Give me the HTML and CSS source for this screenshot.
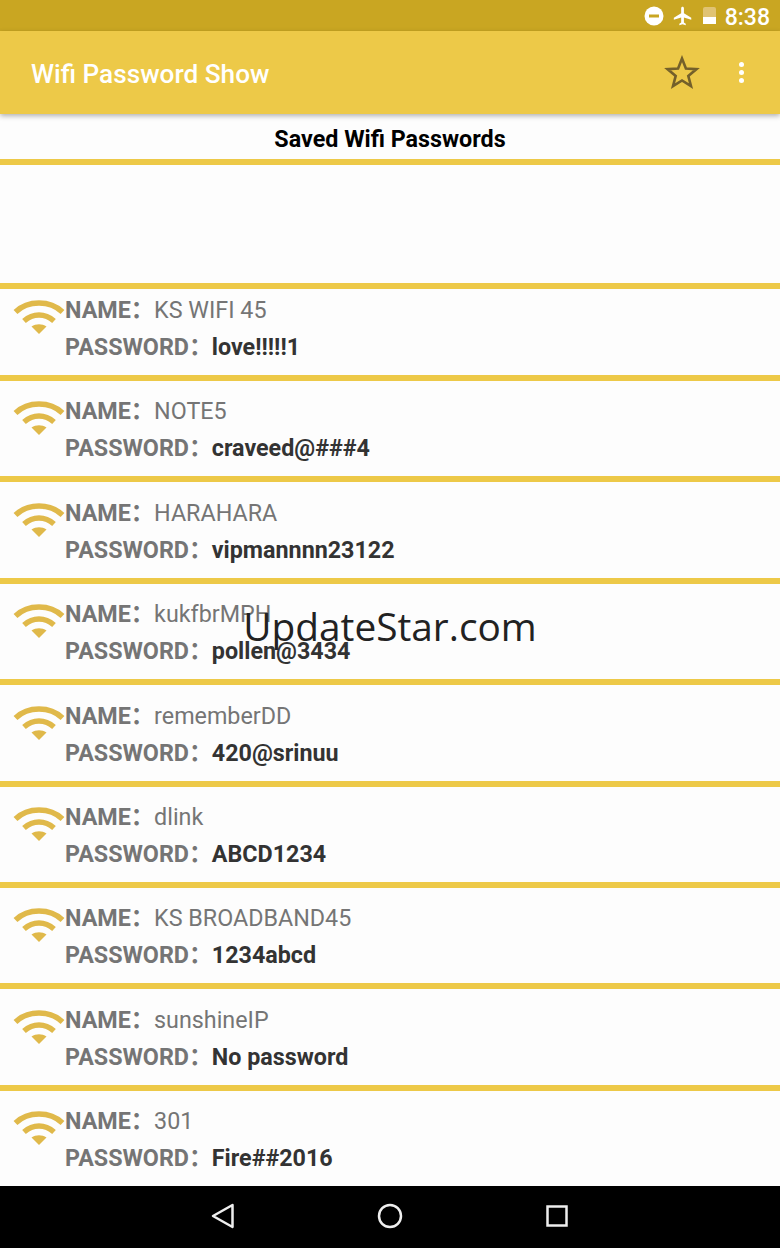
FILE: index.html
```html
<!DOCTYPE html>
<html lang="en">
<head>
    <meta charset="UTF-8">
    <title>Wifi Password Show</title>
    <link rel="stylesheet" href="styles.css">
</head>
<body>
    <div class="statusbar">
        <svg class="ic-dnd" width="20" height="20" viewBox="0 0 20 20"><circle cx="10" cy="10" r="9.500" fill="#fff"/><rect x="5" y="8.500" width="10" height="3" fill="#c9a622"/></svg>
        <svg class="ic-plane" width="22" height="22" viewBox="0 0 24 24"><path fill="#fff" d="M21 16v-2l-8-5V3.500C13 2.670 12.330 2 11.500 2S10 2.670 10 3.500V9l-8 5v2l8-2.500V19l-2 1.500V22l3.500-1 3.500 1v-1.500L13 19v-5.500l8 2.500z"/></svg>
        <div class="battery"><div class="battery-fill"></div></div>
        <span class="clock">8:38</span>
    </div>

    <div class="appbar">
        <span class="appbar-title">Wifi Password Show</span>
        <svg class="ic-star" width="36" height="36" viewBox="0 0 36 36"><path fill="none" stroke="#74602a" stroke-width="2.600" stroke-linejoin="miter" d="M18 3.500l3.900 10 10.600.6-8.200 6.800 2.700 10.300L18 25.500l-9 5.700 2.700-10.300-8.200-6.800 10.600-.6z"/></svg>
        <div class="overflow"><i></i><i></i><i></i></div>
    </div>

    <div class="content">
        <h2 class="heading">Saved Wifi Passwords</h2>
        <div class="rule"></div>
        <div class="adspace"></div>
        <div class="rule"></div>

        <div class="list">
            <div class="row first">
                <svg class="wifi" viewBox="0 0 52 38"><use href="#wifi-icon"/></svg>
                <div class="info">
                    <div class="line"><b class="label">NAME：</b><span class="name">KS WIFI 45</span></div>
                    <div class="line"><b class="label">PASSWORD：</b><b class="pass">love!!!!!1</b></div>
                </div>
            </div>
            <div class="rule"></div>
            <div class="row">
                <svg class="wifi" viewBox="0 0 52 38"><use href="#wifi-icon"/></svg>
                <div class="info">
                    <div class="line"><b class="label">NAME：</b><span class="name">NOTE5</span></div>
                    <div class="line"><b class="label">PASSWORD：</b><b class="pass">craveed@###4</b></div>
                </div>
            </div>
            <div class="rule"></div>
            <div class="row">
                <svg class="wifi" viewBox="0 0 52 38"><use href="#wifi-icon"/></svg>
                <div class="info">
                    <div class="line"><b class="label">NAME：</b><span class="name">HARAHARA</span></div>
                    <div class="line"><b class="label">PASSWORD：</b><b class="pass">vipmannnn23122</b></div>
                </div>
            </div>
            <div class="rule"></div>
            <div class="row">
                <svg class="wifi" viewBox="0 0 52 38"><use href="#wifi-icon"/></svg>
                <div class="info">
                    <div class="line"><b class="label">NAME：</b><span class="name">kukfbrMPH</span></div>
                    <div class="line"><b class="label">PASSWORD：</b><b class="pass">pollen@3434</b></div>
                </div>
            </div>
            <div class="rule"></div>
            <div class="row">
                <svg class="wifi" viewBox="0 0 52 38"><use href="#wifi-icon"/></svg>
                <div class="info">
                    <div class="line"><b class="label">NAME：</b><span class="name">rememberDD</span></div>
                    <div class="line"><b class="label">PASSWORD：</b><b class="pass">420@srinuu</b></div>
                </div>
            </div>
            <div class="rule"></div>
            <div class="row">
                <svg class="wifi" viewBox="0 0 52 38"><use href="#wifi-icon"/></svg>
                <div class="info">
                    <div class="line"><b class="label">NAME：</b><span class="name">dlink</span></div>
                    <div class="line"><b class="label">PASSWORD：</b><b class="pass">ABCD1234</b></div>
                </div>
            </div>
            <div class="rule"></div>
            <div class="row">
                <svg class="wifi" viewBox="0 0 52 38"><use href="#wifi-icon"/></svg>
                <div class="info">
                    <div class="line"><b class="label">NAME：</b><span class="name">KS BROADBAND45</span></div>
                    <div class="line"><b class="label">PASSWORD：</b><b class="pass">1234abcd</b></div>
                </div>
            </div>
            <div class="rule"></div>
            <div class="row">
                <svg class="wifi" viewBox="0 0 52 38"><use href="#wifi-icon"/></svg>
                <div class="info">
                    <div class="line"><b class="label">NAME：</b><span class="name">sunshineIP</span></div>
                    <div class="line"><b class="label">PASSWORD：</b><b class="pass">No password</b></div>
                </div>
            </div>
            <div class="rule"></div>
            <div class="row">
                <svg class="wifi" viewBox="0 0 52 38"><use href="#wifi-icon"/></svg>
                <div class="info">
                    <div class="line"><b class="label">NAME：</b><span class="name">301</span></div>
                    <div class="line"><b class="label">PASSWORD：</b><b class="pass">Fire##2016</b></div>
                </div>
            </div>
        </div>
    </div>

    <div class="navbar">
        <svg width="24" height="26" viewBox="0 0 24 26"><path fill="none" stroke="#eee" stroke-width="2.500" stroke-linejoin="round" d="M21.500 2L2 13l19.500 11z"/></svg>
        <svg width="26" height="26" viewBox="0 0 26 26"><circle cx="13" cy="13" r="11" fill="none" stroke="#eee" stroke-width="2.500"/></svg>
        <svg width="24" height="24" viewBox="0 0 24 24"><rect x="2.500" y="2.500" width="19" height="19" fill="none" stroke="#eee" stroke-width="2.500"/></svg>
    </div>

    <div class="watermark">UpdateStar.com</div>

    <svg class="defs" width="0" height="0">
        <symbol id="wifi-icon" viewBox="0 0 52 38">
            <path fill="none" stroke="#e0b94a" stroke-width="5.500" d="M2.500 16C15 4 37 4 49.500 16"/>
            <path fill="none" stroke="#e0b94a" stroke-width="5.500" d="M11 25c9-8 21-8 30 0"/>
            <path fill="#e0b94a" d="M18.500 30.500c4.500-3 10.500-3 15 0L26 38z"/>
        </symbol>
    </svg>
</body>
</html>
```

FILE: styles.css
```css
* {
    padding: 0px;
    margin: 0px;
    box-sizing: border-box;
}
html, body {
    height: 100%;
}
body {
    background-color: #fdfdfd;
    font-family: "Roboto", sans-serif;
    display: flex;
    flex-direction: column;
    overflow: hidden;
    position: relative;
}

/* STATUS BAR */
.statusbar {
    height: 31px;
    flex: none;
    background-color: #c9a622;
    display: flex;
    align-items: center;
    justify-content: flex-end;
    padding-right: 10px;
    color: #fff;
}
.ic-dnd {
    margin-right: 8px;
}
.ic-plane {
    margin-right: 9px;
}
.battery {
    width: 13px;
    height: 17px;
    background-color: #e0c373;
    border-radius: 2px 2px 0 0;
    display: flex;
    align-items: flex-end;
    margin-right: 9px;
}
.battery-fill {
    width: 100%;
    height: 7px;
    background-color: #fff;
}
.clock {
    font-size: 23px;
    padding-top: 3px;
    font-weight: 500;
}

/* APP BAR */
.appbar {
    height: 83px;
    flex: none;
    background-color: #edc948;
    display: flex;
    align-items: center;
    padding: 0 36px 0 32px;
    box-shadow: 0px 2px 5px rgba(0, 0, 0, 0.3);
    position: relative;
    z-index: 1;
}
.appbar-title {
    flex: 1;
    color: #fff;
    font-size: 26.2px;
    font-weight: 500;
    padding-top: 2px;
    margin-left: -1px;
}
.ic-star {
    margin-right: 39px;
}
.overflow {
    display: flex;
    flex-direction: column;
    gap: 3px;
}
.overflow i {
    display: block;
    width: 5px;
    height: 5px;
    border-radius: 50%;
    background-color: #fff;
}

/* CONTENT */
.content {
    flex: 1;
    min-height: 0;
    overflow: hidden;
}
.heading {
    height: 45px;
    line-height: 50px;
    text-align: center;
    font-size: 23.3px;
    font-weight: 700;
    color: #000;
}
.rule {
    height: 6px;
    background-color: #edc948;
}
.adspace {
    height: 118px;
}
.row {
    height: 95.4px;
    display: flex;
    padding: 12.4px 0 0 13px;
}
.row.first {
    height: 86px;
    padding-top: 3px;
}
.wifi {
    width: 52px;
    height: 38px;
    margin-top: 4px;
    flex: none;
}
.line {
    height: 37px;
    line-height: 37px;
    font-size: 23.3px;
    white-space: nowrap;
}
.label {
    color: #757575;
    font-weight: 700;
    font-family: "Roboto", "Noto Sans CJK SC", sans-serif;
}
.name {
    color: #757575;
}
.pass {
    color: #333;
    font-weight: 700;
    margin-left: -0.5px;
}

/* NAV BAR */
.navbar {
    height: 62px;
    flex: none;
    background-color: #000;
    display: flex;
    align-items: center;
    justify-content: center;
    gap: 142px;
    padding-bottom: 2px;
}

.watermark {
    position: absolute;
    top: 599px;
    left: 0;
    right: 0;
    text-align: center;
    font-family: "Open Sans", sans-serif;
    font-size: 38.8px;
    line-height: 54px;
    color: #222;
}
.defs {
    position: absolute;
}
```
